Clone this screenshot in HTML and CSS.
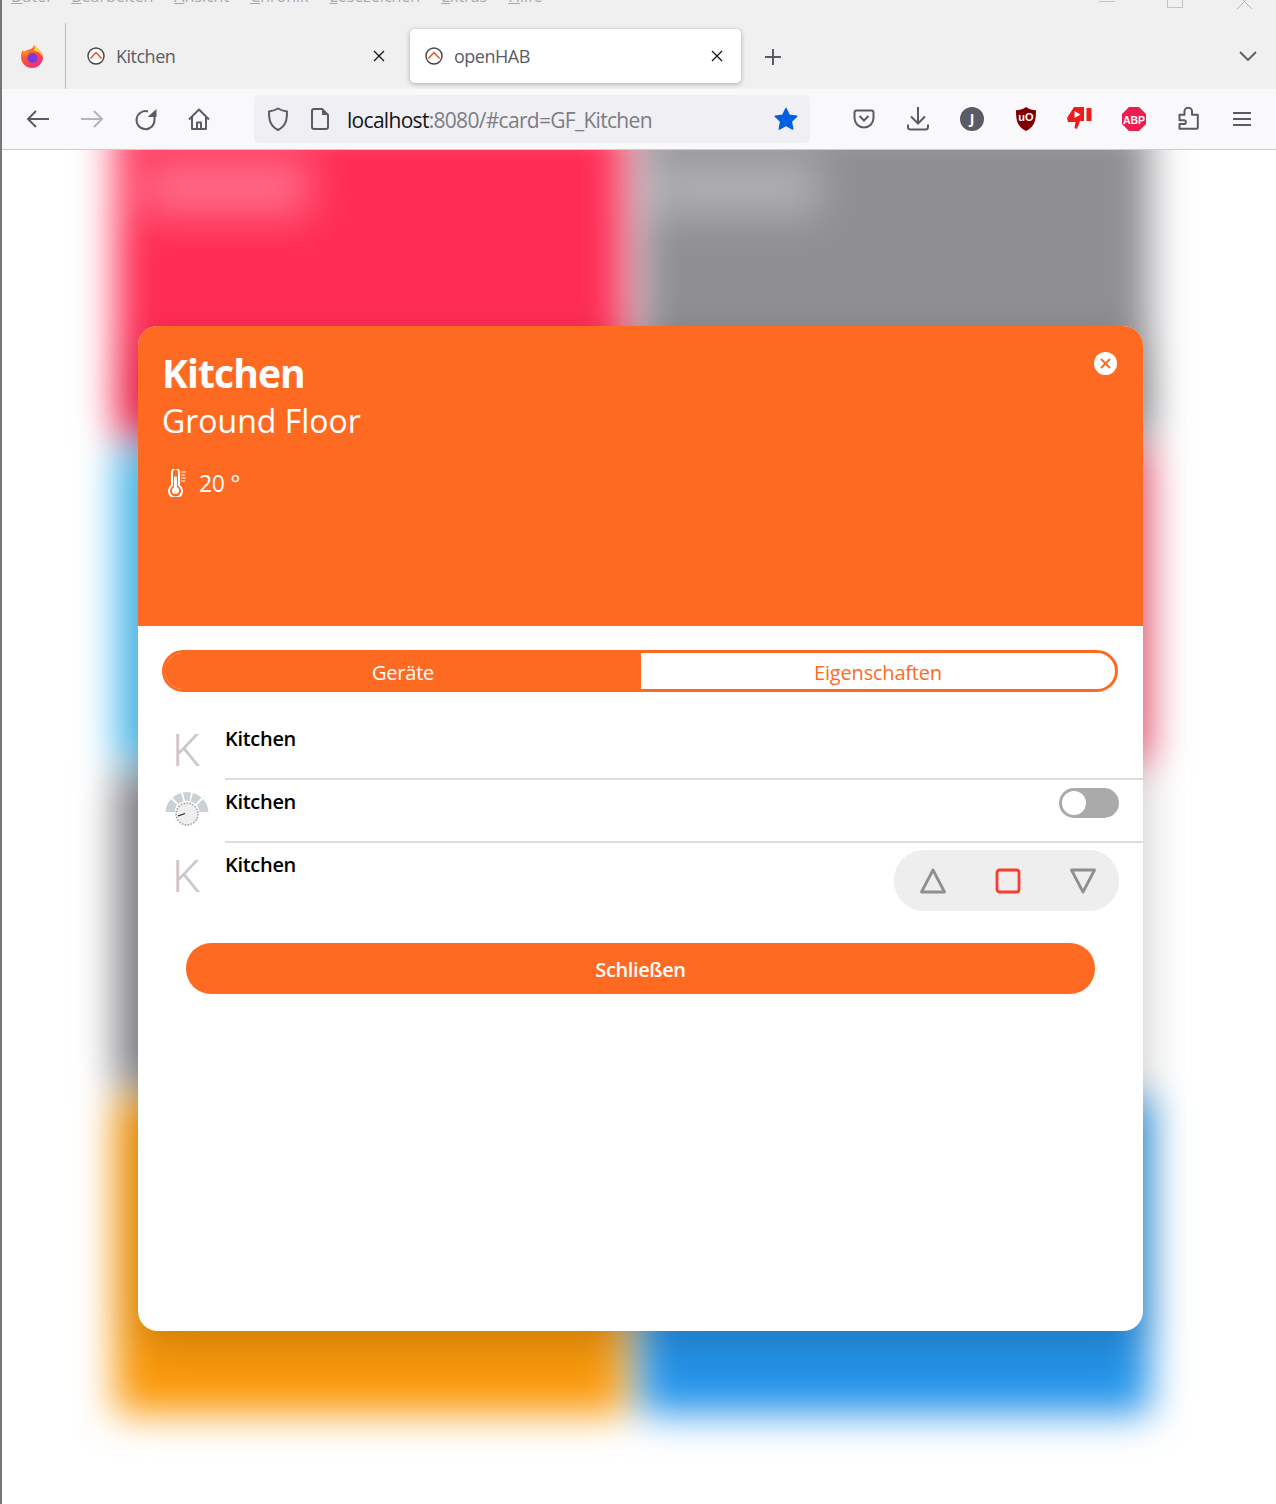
FILE: index.html

```html
<!DOCTYPE html>
<html lang="de">
<head>
    <meta charset="UTF-8">
    <title>openHAB</title>
    <link rel="stylesheet" href="styles.css">
</head>
<body>

    <div class="menubar">
        <span class="menu-item"><u>D</u>atei</span>
        <span class="menu-item"><u>B</u>earbeiten</span>
        <span class="menu-item"><u>A</u>nsicht</span>
        <span class="menu-item"><u>C</u>hronik</span>
        <span class="menu-item"><u>L</u>esezeichen</span>
        <span class="menu-item"><u>E</u>xtras</span>
        <span class="menu-item"><u>H</u>ilfe</span>
        <div class="window-controls">
            <span class="win-min"></span>
            <span class="win-max"></span>
            <svg class="win-close" width="16" height="10" viewBox="0 0 16 10"><path d="M1 -6 16 9M16 -6 1 9" stroke="#b4b4b4" fill="none"/></svg>
        </div>
    </div>

    <div class="tabbar">
        <div class="ff-button">
            <svg width="24" height="24" viewBox="0 0 24 24">
                <defs>
                    <linearGradient id="ffbody" x1="0" y1="0" x2="0.6" y2="1">
                        <stop offset="0" stop-color="#ff9a1f"/>
                        <stop offset="0.55" stop-color="#ff4f3a"/>
                        <stop offset="1" stop-color="#ef2f86"/>
                    </linearGradient>
                </defs>
                <path d="M14 1c3 2 3 3 4 4 3 2 5 5 5 8a11 11 0 0 1-22 0c0-3 .6-5 1.600-7 .3 1 1 2 2 2 1-1.500 3-2.200 5-2.500 2.400-.5 4-2.500 4.400-4.500z" fill="url(#ffbody)"/>
                <path d="M14 1c3 2 3 3 4 4 3 2 5 5 4.500 8.500C21 9 17 7 13.500 7 15 5 15 3 14 1z" fill="#ffd43b"/>
                <circle cx="12.500" cy="14" r="5" fill="#7b3bd6"/>
                <path d="M3 8c2-1 5-1.500 7 0-2 .5-3 2-3 4-2 0-3.500-2-4-4z" fill="#ff8a1f"/>
            </svg>
        </div>
        <div class="tab">
            <svg class="favicon" width="18" height="18" viewBox="0 0 18 18">
                <circle cx="9" cy="9" r="8" fill="#fff" stroke="#444" stroke-width="1.400"/>
                <path d="M3.500 11.500 9 5.500 14.500 11.500" fill="none" stroke="#e5512a" stroke-width="1.500"/>
            </svg>
            <span class="tab-title">Kitchen</span>
            <svg class="tab-close" width="12" height="12" viewBox="0 0 12 12"><path d="M1 1 11 11M11 1 1 11" stroke="#15141a" stroke-width="1.300"/></svg>
        </div>
        <div class="tab tab-active">
            <svg class="favicon" width="18" height="18" viewBox="0 0 18 18">
                <circle cx="9" cy="9" r="8" fill="#fff" stroke="#444" stroke-width="1.400"/>
                <path d="M3.500 11.500 9 5.500 14.500 11.500" fill="none" stroke="#e5512a" stroke-width="1.500"/>
            </svg>
            <span class="tab-title">openHAB</span>
            <svg class="tab-close" width="12" height="12" viewBox="0 0 12 12"><path d="M1 1 11 11M11 1 1 11" stroke="#15141a" stroke-width="1.300"/></svg>
        </div>
        <svg class="new-tab" width="18" height="18" viewBox="0 0 18 18"><path d="M9 1V17M1 9H17" stroke="#5b5b66" stroke-width="2"/></svg>
        <svg class="tab-list" width="18" height="10" viewBox="0 0 18 10"><path d="M1 1 9 9 17 1" fill="none" stroke="#5b5b66" stroke-width="1.800"/></svg>
    </div>

    <div class="toolbar">
        <div class="tool-btn">
            <svg width="24" height="20" viewBox="0 0 24 20"><path d="M23 10H2M10 2 2 10 10 18" fill="none" stroke="#5b5b66" stroke-width="2"/></svg>
        </div>
        <div class="tool-btn">
            <svg width="24" height="20" viewBox="0 0 24 20"><path d="M1 10H22M14 2 22 10 14 18" fill="none" stroke="#b5b5ba" stroke-width="2"/></svg>
        </div>
        <div class="tool-btn">
            <svg width="24" height="24" viewBox="0 0 24 24"><path d="M20.500 5.500V13A9 9 0 1 1 14 4.500" fill="none" stroke="#5b5b66" stroke-width="2"/><path d="M13.500 10H22.500V2z" fill="#5b5b66"/></svg>
        </div>
        <div class="tool-btn">
            <svg class="home-icon" width="24" height="24" viewBox="0 0 24 24"><path d="M2 12.500 12 2.500 22 12.500M5 10V22H19V10M10 22V15.500H14V22" fill="none" stroke="#5b5b66" stroke-width="2" stroke-linejoin="round"/></svg>
        </div>
        <div class="urlbar">
            <svg class="url-shield" width="22" height="24" viewBox="0 0 22 24"><path d="M11 1.500C8 3.500 5 4 2 4.500 2 13 3 19 11 23 19 19 20 13 20 4.500 17 4 14 3.500 11 1.500z" fill="none" stroke="#5b5b66" stroke-width="2" stroke-linejoin="round"/></svg>
            <svg class="url-page" width="18" height="22" viewBox="0 0 18 22"><path d="M3 1H11L17 7V19Q17 21 15 21H3Q1 21 1 19V3Q1 1 3 1z" fill="none" stroke="#5b5b66" stroke-width="2"/><path d="M11 1V7H17z" fill="#5b5b66"/></svg>
            <span class="url-host">localhost</span><span class="url-rest">:8080/#card=GF_Kitchen</span>
            <svg class="url-star" width="24" height="24" viewBox="0 0 24 24"><path d="M12 1.500 15.300 8.300 22.800 9.300 17.300 14.500 18.700 22 12 18.400 5.300 22 6.700 14.500 1.200 9.300 8.700 8.300z" fill="#0060df" stroke="#0060df" stroke-width="1.500" stroke-linejoin="round"/></svg>
        </div>
        <div class="toolbar-right">
            <div class="tool-btn">
                <svg width="22" height="22" viewBox="0 0 22 22"><path d="M3.500 2.500H18.500Q20.500 2.500 20.500 4.500V10A9.500 9.500 0 0 1 1.500 10V4.500Q1.500 2.500 3.500 2.500z" fill="none" stroke="#5b5b66" stroke-width="2"/><path d="M6.500 8 11 12.500 15.500 8" fill="none" stroke="#5b5b66" stroke-width="2"/></svg>
            </div>
            <div class="tool-btn">
                <svg width="22" height="24" viewBox="0 0 22 24"><path d="M11 0V16M4 9.500 11 16.500 18 9.500M1 17.500V20Q1 22.500 3.500 22.500H18.500Q21 22.500 21 20V17.500" fill="none" stroke="#5b5b66" stroke-width="2"/></svg>
            </div>
            <div class="tool-btn">
                <div class="avatar">J</div>
            </div>
            <div class="tool-btn">
                <svg width="22" height="24" viewBox="0 0 22 24">
                    <path d="M11 0C8 2.500 4 3 1 3.200 1 13 2 19.500 11 24 20 19.500 21 13 21 3.200 18 3 14 2.500 11 0z" fill="#800000"/>
                    <text x="11" y="14" class="ublock-text">uO</text>
                </svg>
            </div>
            <div class="tool-btn">
                <svg width="26" height="24" viewBox="0 0 26 24">
                    <path d="M7 0H17V14H13L10 22 7.500 21 8.500 15H1L0 11z" fill="#f01b1b"/>
                    <path d="M7.500 4 13.500 7.500 7.500 11z" fill="#fff"/>
                    <rect x="19.500" y="1" width="5" height="13" fill="#f01b1b"/>
                </svg>
            </div>
            <div class="tool-btn">
                <svg width="24" height="24" viewBox="0 0 24 24">
                    <path d="M7 0H17L24 7V17L17 24H7L0 17V7z" fill="#ee1d4f"/>
                    <text x="12" y="16.500" class="abp-text">ABP</text>
                </svg>
            </div>
            <div class="tool-btn">
                <svg width="22" height="24" viewBox="0 0 22 24"><path d="M2.500 7.700H7.500V4A3.700 3.200 0 0 1 15 4V7.700H20.800V20.700Q20.800 21.700 19.800 21.700H2.500V17H7A1.800 1.800 0 0 0 7 13.300H2.500z" fill="none" stroke="#5b5b66" stroke-width="2" stroke-linejoin="round"/></svg>
            </div>
            <div class="tool-btn">
                <svg width="20" height="16" viewBox="0 0 20 16"><path d="M1 2H19M1 8H19M1 14H19" stroke="#5b5b66" stroke-width="2"/></svg>
            </div>
        </div>
    </div>

    <div class="page">
        <div class="tiles">
            <div class="tile tile-red"><div class="tile-glow"></div></div>
            <div class="tile tile-grey"><div class="tile-glow"></div></div>
            <div class="tile tile-blue"></div>
            <div class="tile tile-pink"></div>
            <div class="tile tile-grey"></div>
            <div class="tile tile-white"></div>
            <div class="tile tile-orange"></div>
            <div class="tile tile-azure"></div>
        </div>

        <div class="modal">
            <div class="modal-head">
                <div class="modal-close">
                    <svg width="11" height="11" viewBox="0 0 11 11"><path d="M1 1 10 10M10 1 1 10" stroke="#ff6a22" stroke-width="2"/></svg>
                </div>
                <div class="modal-title">Kitchen</div>
                <div class="modal-subtitle">Ground Floor</div>
                <div class="modal-temp">
                    <svg width="18" height="28" viewBox="0 0 18 28">
                        <path d="M4 3A3.500 3.500 0 0 1 11 3V16.500A6.500 6.500 0 1 1 4 16.500z" fill="none" stroke="#fff" stroke-width="2"/>
                        <circle cx="7.500" cy="21.500" r="3.500" fill="#fff"/>
                        <path d="M6.500 8H8.500V20H6.500zM13 3H18M13 6H17M13 9H18M13 12H17" fill="#fff" stroke="#fff" stroke-width="1"/>
                    </svg>
                    <span>20 °</span>
                </div>
            </div>

            <div class="modal-body">
                <div class="segmented">
                    <div class="segment segment-on">Geräte</div>
                    <div class="segment">Eigenschaften</div>
                </div>

                <div class="list">
                    <div class="row">
                        <div class="row-icon"><span class="letter-icon">K</span></div>
                        <div class="row-main row-line">
                            <span class="row-title">Kitchen</span>
                        </div>
                    </div>
                    <div class="row">
                        <div class="row-icon">
                            <svg width="44" height="36" viewBox="0 0 44 36">
                                <path d="M0.500 21A21 21 0 0 1 6 8L12 14A13 13 0 0 0 9.500 21z" fill="#c9d1d5"/>
                                <path d="M7.500 6.500A21 21 0 0 1 16 2L18.500 10.500A13 13 0 0 0 13.500 13z" fill="#c9d1d5"/>
                                <path d="M18 1.500A21 21 0 0 1 26 1.500L24.500 10A13 13 0 0 0 20 10z" fill="#c9d1d5"/>
                                <path d="M28 2A21 21 0 0 1 36.500 6.500L30.500 13A13 13 0 0 0 25.500 10.500z" fill="#c9d1d5"/>
                                <path d="M38 8A21 21 0 0 1 43.500 21H34.500A13 13 0 0 0 32 14z" fill="#c9d1d5"/>
                                <circle cx="22" cy="23" r="11" fill="#eeeeee" stroke="#999" stroke-width="1.500" stroke-dasharray="1.500 1.500"/>
                                <path d="M13 25 20 22.500" stroke="#222" stroke-width="1.200"/>
                            </svg>
                        </div>
                        <div class="row-main row-line">
                            <span class="row-title">Kitchen</span>
                            <div class="toggle"><span class="toggle-knob"></span></div>
                        </div>
                    </div>
                    <div class="row">
                        <div class="row-icon"><span class="letter-icon">K</span></div>
                        <div class="row-main">
                            <span class="row-title">Kitchen</span>
                            <div class="rollershutter">
                                <svg width="26" height="26" viewBox="0 0 26 26"><path d="M13 2 24.500 24H1.500z" fill="none" stroke="#8e8e93" stroke-width="2.800" stroke-linejoin="round"/></svg>
                                <svg width="26" height="26" viewBox="0 0 26 26"><rect x="2" y="2" width="22" height="22" rx="2.500" fill="none" stroke="#ff3b30" stroke-width="2.800"/></svg>
                                <svg width="26" height="26" viewBox="0 0 26 26"><path d="M13 24 24.500 2H1.500z" fill="none" stroke="#8e8e93" stroke-width="2.800" stroke-linejoin="round"/></svg>
                            </div>
                        </div>
                    </div>
                </div>

                <button class="close-btn">Schließen</button>
            </div>
        </div>
    </div>

</body>
</html>
```

FILE: styles.css

```css
* {
    box-sizing: border-box;
}

html, body {
    margin: 0;
    padding: 0;
}

body {
    width: 1276px;
    height: 1504px;
    overflow: hidden;
    border-left: 2px solid #777777;
    background-color: #FFFFFF;
    font-family: "Open Sans", "Noto Sans", sans-serif;
}

/* window chrome */
.menubar {
    height: 9px;
    background-color: #F0F0F1;
    display: flex;
    align-items: flex-end;
    overflow: hidden;
    position: relative;
    font-size: 16px;
    line-height: 20px;
    color: #A9A9AC;
    padding-left: 9px;
}

.menu-item {
    margin-right: 21px;
    position: relative;
    top: -3px;
    flex: none;
}

.window-controls {
    margin-left: auto;
    display: flex;
    align-items: flex-start;
    align-self: flex-start;
    padding-right: 24px;
}

.win-min {
    width: 16px;
    height: 1px;
    margin-top: 1px;
    background-color: #C4C4C4;
}

.win-max {
    width: 16px;
    height: 8px;
    margin-left: 52px;
    border: 1px solid #C4C4C4;
    border-top: none;
}

.win-close {
    margin-left: 53px;
}

.tabbar {
    height: 80px;
    background-color: #F0F0F1;
    display: flex;
    align-items: center;
    position: relative;
}

.ff-button {
    width: 64px;
    height: 66px;
    margin-top: 14px;
    border-right: 1px solid #BDBDBD;
    display: flex;
    align-items: center;
    justify-content: center;
    padding-right: 4px;
}

.tab {
    width: 332px;
    height: 54px;
    margin-top: 14px;
    padding: 0 13px 0 21px;
    display: flex;
    align-items: center;
    font-size: 18px;
    color: #5B5B66;
}

.tab-title {
    margin-left: 11px;
    flex: 1;
    letter-spacing: -0.5px;
}

.tab-active {
    width: 331px;
    margin-left: 12px;
    padding-left: 15px;
    padding-right: 18px;
    background-color: #FFFFFF;
    border-radius: 5px;
    box-shadow: 0 1px 5px rgba(0, 0, 0, 0.3);
}

.new-tab {
    margin: 16px 0 0 23px;
}

.tab-list {
    margin: 14px 19px 0 auto;
}

.toolbar {
    height: 61px;
    background-color: #F9F9FB;
    border-bottom: 1px solid #CCCCCC;
    display: flex;
    align-items: flex-start;
    padding-left: 9px;
    padding-top: 6px;
}

.tool-btn {
    width: 54px;
    height: 48px;
    display: flex;
    align-items: center;
    justify-content: center;
}

.home-icon {
    margin-right: 2px;
}

.urlbar {
    width: 556px;
    height: 48px;
    margin-left: 27px;
    background-color: #F0F0F4;
    border-radius: 5px;
    display: flex;
    align-items: center;
    padding: 0 12px 0 13px;
    font-size: 21px;
    letter-spacing: -0.7px;
}

.url-page {
    margin-left: 22px;
    margin-right: 18px;
}

.url-host {
    color: #15141A;
    padding-top: 2px;
}

.url-rest {
    color: #7C7C84;
    flex: 1;
    padding-top: 2px;
}

.toolbar-right {
    margin-left: 27px;
    display: flex;
}

.avatar {
    width: 24px;
    height: 24px;
    border-radius: 50%;
    background-color: #5B5B66;
    color: #FFFFFF;
    font-size: 14px;
    font-weight: 700;
    text-align: center;
    line-height: 24px;
}

.ublock-text {
    font-size: 11px;
    font-weight: 700;
    fill: #FFFFFF;
    text-anchor: middle;
    font-family: "Liberation Sans", sans-serif;
}

.abp-text {
    font-size: 10.5px;
    font-weight: 700;
    fill: #FFFFFF;
    text-anchor: middle;
    font-family: "Liberation Sans", sans-serif;
}

/* page behind the popup */
.page {
    height: 1354px;
    position: relative;
    overflow: hidden;
}

.tiles {
    margin-top: -30px;
    margin-left: 113px;
    width: 1035px;
    display: grid;
    grid-template-columns: 510px 510px;
    grid-auto-rows: 316px;
    gap: 10px 15px;
    filter: blur(19px);
}

.tile {
    position: relative;
}

.tile-red { background-color: #FF2D55; }
.tile-grey { background-color: #8E8E93; }
.tile-blue { background-color: #5AC8FA; }
.tile-pink { background-color: #FF2D55; opacity: 0.75; }
.tile-white { background-color: #F2F2F2; opacity: 0.8; }
.tile-orange { background-color: #FA9A0C; }
.tile-azure { background-color: #2594EA; }

.tile-glow {
    position: absolute;
    top: 38px;
    left: 25px;
    width: 170px;
    height: 58px;
    background-color: rgba(255, 255, 255, 0.3);
    filter: blur(8px);
}

.tile-grey .tile-glow {
    left: 10px;
}

/* popup */
.modal {
    position: absolute;
    top: 176px;
    left: 136px;
    width: 1005px;
    height: 1005px;
    background-color: #FFFFFF;
    border-radius: 20px;
    overflow: hidden;
    box-shadow: 0 15px 45px rgba(0, 0, 0, 0.18);
}

.modal-head {
    height: 300px;
    background-color: #FF6A22;
    color: #FFFFFF;
    padding: 19px 24px;
    position: relative;
}

.modal-close {
    position: absolute;
    top: 26px;
    right: 26px;
    width: 23px;
    height: 23px;
    border-radius: 50%;
    background-color: #FFFFFF;
    display: flex;
    align-items: center;
    justify-content: center;
}

.modal-title {
    font-size: 39px;
    font-weight: 700;
    line-height: 56px;
    letter-spacing: -0.9px;
}

.modal-subtitle {
    font-size: 32px;
    line-height: 40px;
    font-weight: 400;
}

.modal-temp {
    margin-top: 26px;
    display: flex;
    align-items: center;
    gap: 13px;
    padding-left: 6px;
    font-size: 23px;
    font-weight: 400;
    letter-spacing: -0.3px;
}

.modal-body {
    padding: 24px 24px 0 24px;
}

.segmented {
    display: flex;
    width: 956px;
    height: 42px;
    border: 3px solid #FF6A22;
    border-radius: 21px;
    overflow: hidden;
}

.segment {
    flex: 1;
    text-align: center;
    color: #FF6A22;
    font-size: 20px;
    line-height: 40px;
    letter-spacing: -0.2px;
}

.segment-on {
    flex: 0 0 476px;
    background-color: #FF6A22;
    color: #FFFFFF;
}

.list {
    margin-top: 24px;
    margin-right: -24px;
}

.row {
    display: flex;
}

.row-icon {
    width: 63px;
    flex: none;
    display: flex;
    justify-content: center;
    padding: 12px 14px 0 0;
}

.row-main {
    flex: 1;
    min-height: 63px;
    display: flex;
    justify-content: space-between;
    align-items: flex-start;
    padding-right: 24px;
}

.row-line {
    min-height: 64px;
    margin-bottom: -1px;
    border-bottom: 2px solid #DDDDDD;
}

.row-title {
    font-size: 20px;
    font-weight: 600;
    line-height: 46px;
    color: #000000;
    letter-spacing: -0.3px;
}

.letter-icon {
    font-family: Roboto, sans-serif;
    font-weight: 300;
    font-size: 45px;
    line-height: 46px;
    color: #C8C8C8;
}

.toggle {
    width: 60px;
    height: 30px;
    margin-top: 9px;
    border-radius: 15px;
    background-color: #AAAAAA;
    padding: 3px;
}

.toggle-knob {
    display: block;
    width: 24px;
    height: 24px;
    border-radius: 50%;
    background-color: #FFFFFF;
}

.rollershutter {
    width: 225px;
    height: 61px;
    margin-top: 8px;
    border-radius: 30px;
    background-color: #EEEEEE;
    display: flex;
    align-items: center;
    justify-content: space-between;
    padding: 0 23px 0 26px;
}

.close-btn {
    display: block;
    width: 909px;
    height: 51px;
    margin: 32px 0 0 24px;
    padding-top: 3px;
    border: none;
    border-radius: 25px;
    background-color: #FF6A22;
    color: #FFFFFF;
    font-family: inherit;
    font-size: 20px;
    font-weight: 600;
    letter-spacing: -0.4px;
}
```
